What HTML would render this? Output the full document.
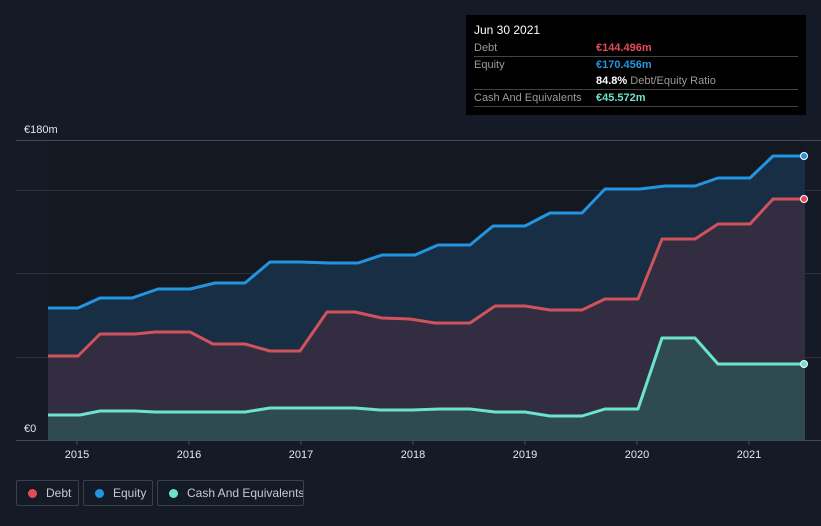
<!DOCTYPE html>
<html><head><meta charset="utf-8"><style>
body{margin:0;width:821px;height:526px;background:#151b26;font-family:"Liberation Sans",sans-serif;overflow:hidden;position:relative}
.tt{position:absolute;left:466px;top:15px;width:340px;height:100px;background:#000;font-size:11px;color:#9a9a9a}
.tt .r{position:absolute;left:8px;right:8px;border-bottom:1px solid #444;height:16px;line-height:16px}
.lg{position:absolute;top:480px;height:26px;border:1px solid #3a404b;border-radius:2px;color:#c7c9cc;font-size:12px;line-height:24px;box-sizing:border-box;white-space:nowrap;overflow:hidden}
.lg i{display:inline-block;width:9px;height:9px;border-radius:50%;margin:0 9px 0 11px;vertical-align:-1px}
</style></head><body>
<svg width="821" height="526" style="position:absolute;left:0;top:0">
<rect x="48" y="140" width="757" height="300" fill="#131821"/>
<g stroke="#2c313b" stroke-width="1">
<line x1="16" y1="140.5" x2="821" y2="140.5" stroke="#444a54"/>
<line x1="16" y1="190.5" x2="821" y2="190.5"/>
<line x1="16" y1="273.5" x2="821" y2="273.5"/>
<line x1="16" y1="357.5" x2="821" y2="357.5"/>
<line x1="16" y1="440.5" x2="821" y2="440.5" stroke="#444a54"/>
</g>
<path d="M48,308 L78,308 100,298 132,298 158,289 190,289 215,283 245,283 270,262 300,262 330,263 358,263 382,255 415,255 438,245 470,245 493,226 525,226 550,213 582,213 605,189 640,189 665,186 695,186 718,178 750,178 773,156 805,156 L805,440 48,440Z" fill="#172e45"/>
<path d="M48,356 L78,356 100,334 135,334 155,332 190,332 213,344 245,344 270,351 300,351 327,312 355,312 382,318 410,319 435,323 470,323 495,306 525,306 550,310 582,310 605,299 638,299 662,239 695,239 718,224 750,224 773,199 805,199 L805,440 48,440Z" fill="#322d40"/>
<path d="M48,415 L80,415 100,411 135,411 155,412 245,412 270,408 355,408 380,410 412,410 440,409 470,409 495,412 525,412 550,416 582,416 605,409 638,409 662,338 695,338 718,364 805,364 L805,440 48,440Z" fill="#2f4a50"/>
<g fill="none" stroke-width="3" stroke-linejoin="round">
<path d="M48,308 L78,308 100,298 132,298 158,289 190,289 215,283 245,283 270,262 300,262 330,263 358,263 382,255 415,255 438,245 470,245 493,226 525,226 550,213 582,213 605,189 640,189 665,186 695,186 718,178 750,178 773,156 805,156" stroke="#2394df"/>
<path d="M48,356 L78,356 100,334 135,334 155,332 190,332 213,344 245,344 270,351 300,351 327,312 355,312 382,318 410,319 435,323 470,323 495,306 525,306 550,310 582,310 605,299 638,299 662,239 695,239 718,224 750,224 773,199 805,199" stroke="#d0525c"/>
<path d="M48,415 L80,415 100,411 135,411 155,412 245,412 270,408 355,408 380,410 412,410 440,409 470,409 495,412 525,412 550,416 582,416 605,409 638,409 662,338 695,338 718,364 805,364" stroke="#6ce3cd"/>
</g>
<circle cx="804" cy="156" r="3.5" fill="#2394df" stroke="#fff" stroke-width="1"/>
<circle cx="804" cy="199" r="3.5" fill="#e64b55" stroke="#fff" stroke-width="1"/>
<circle cx="804" cy="364" r="3.5" fill="#6ce3cd" stroke="#fff" stroke-width="1"/>
<g stroke="#444a54"><line x1="77" y1="440" x2="77" y2="445"/><line x1="189" y1="440" x2="189" y2="445"/><line x1="301" y1="440" x2="301" y2="445"/><line x1="413" y1="440" x2="413" y2="445"/><line x1="525" y1="440" x2="525" y2="445"/><line x1="637" y1="440" x2="637" y2="445"/><line x1="749" y1="440" x2="749" y2="445"/></g>
<g fill="#e6e7e9" font-size="11" font-family="Liberation Sans" text-anchor="middle">
<text x="77" y="458">2015</text><text x="189" y="458">2016</text><text x="301" y="458">2017</text><text x="413" y="458">2018</text><text x="525" y="458">2019</text><text x="637" y="458">2020</text><text x="749" y="458">2021</text>
</g>
<text x="24" y="133" fill="#e6e7e9" font-size="11" font-family="Liberation Sans">€180m</text>
<text x="24" y="432" fill="#e6e7e9" font-size="11" font-family="Liberation Sans">€0</text>
</svg>
<div class="tt">
<div style="position:absolute;left:8px;top:8px;color:#fff;font-size:12px">Jun 30 2021</div>
<div class="r" style="top:25px">Debt<span style="position:absolute;left:122px;color:#e64b55;font-weight:bold">€144.496m</span></div>
<div class="r" style="top:42px;border:none">Equity<span style="position:absolute;left:122px;color:#2394df;font-weight:bold">€170.456m</span></div>
<div class="r" style="top:58px"><span style="position:absolute;left:122px"><b style="color:#fff">84.8%</b> Debt/Equity Ratio</span></div>
<div class="r" style="top:75px">Cash And Equivalents<span style="position:absolute;left:122px;color:#6ce3cd;font-weight:bold">€45.572m</span></div>
</div>
<div class="lg" style="left:16px;width:63px"><i style="background:#e64b55"></i>Debt</div>
<div class="lg" style="left:83px;width:70px"><i style="background:#2394df"></i>Equity</div>
<div class="lg" style="left:157px;width:147px"><i style="background:#6ce3cd"></i>Cash And Equivalents</div>
</body></html>
